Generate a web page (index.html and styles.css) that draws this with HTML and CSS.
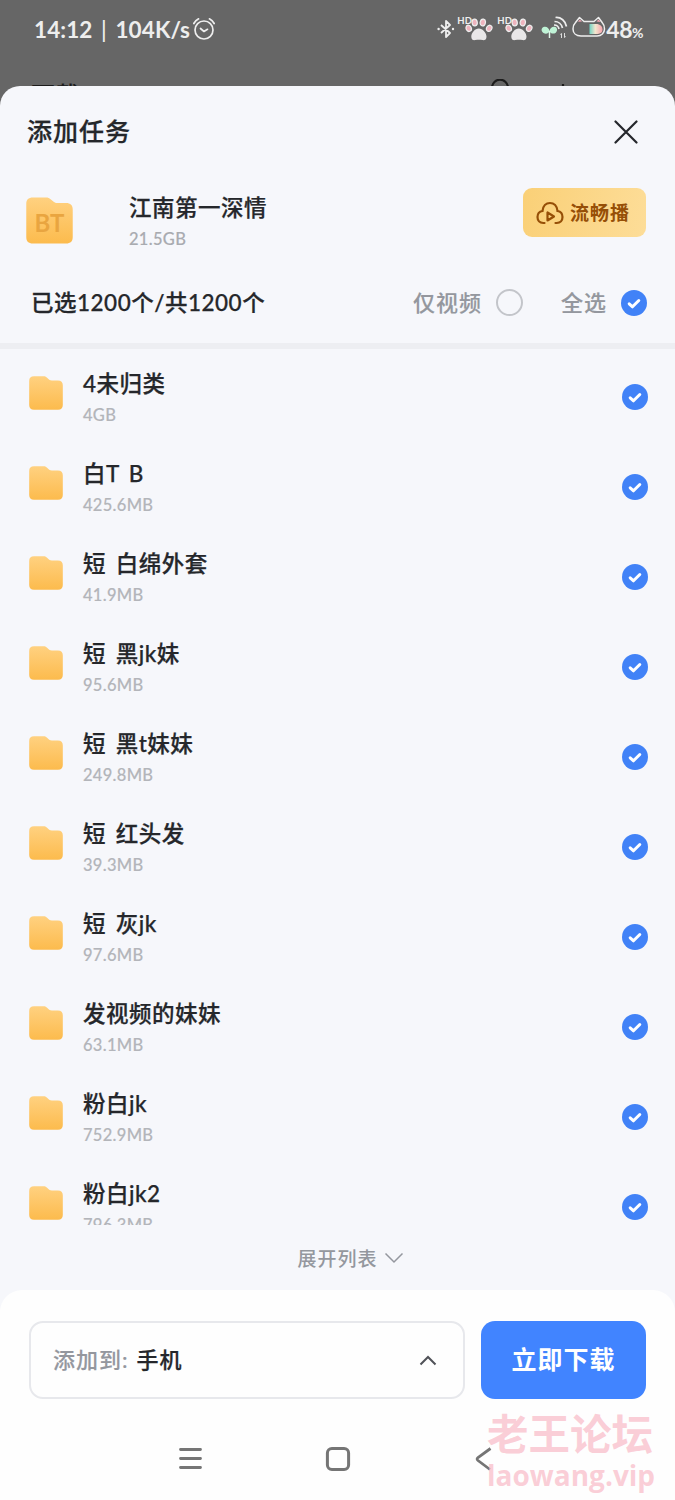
FILE: index.html
```html
<!DOCTYPE html>
<html lang="zh-CN">
<head>
  <meta charset="UTF-8" />
  <meta name="viewport" content="width=device-width, initial-scale=1.0"/>
  <title>添加任务</title>
  <link rel="stylesheet" href="styles.css">
</head>
<body>
  <!-- shared icons -->
  <svg class="defs">
    <defs>
      <linearGradient id="folderFill" x1="0" y1="0" x2="0" y2="1">
        <stop offset="0" stop-color="#ffd180"/>
        <stop offset="1" stop-color="#fcbb4d"/>
      </linearGradient>
    </defs>
    <symbol id="folder" viewBox="0 0 34 34">
      <path fill="url(#folderFill)" d="M5 .3h9.500c1.500 0 2.300.4 3.300 1.300l2.200 1.900c.8.700 1.600.9 2.700.9H29c3.200 0 4.800 1.600 4.800 4.800V29c0 3.200-1.600 4.700-4.800 4.700H5C1.800 33.700.2 32.200.2 29V5C.2 1.800 1.800.3 5 .3z"/>
    </symbol>
    <symbol id="check" viewBox="0 0 26 26">
      <circle cx="13" cy="13" r="13" fill="#4182f7"/>
      <path d="M8.200 13.800l3.300 3 6.300-6.300" fill="none" stroke="#fff" stroke-width="3" stroke-linecap="round" stroke-linejoin="round"/>
    </symbol>
    <symbol id="paw" viewBox="0 0 28 23">
      <g fill="#efb4be" stroke="#eee" stroke-width="1.200">
        <ellipse cx="3.700" cy="10.300" rx="2.600" ry="3.200" transform="rotate(-25 3.700 10.300)"/>
        <ellipse cx="9.700" cy="4.500" rx="2.600" ry="3.400" transform="rotate(-8 9.700 4.500)"/>
        <ellipse cx="17.800" cy="4.500" rx="2.600" ry="3.400" transform="rotate(12 17.800 4.500)"/>
        <ellipse cx="24.200" cy="10.300" rx="2.600" ry="3.200" transform="rotate(28 24.200 10.300)"/>
      </g>
      <path fill="#e9e7e8" d="M13.800 10.500c3.800 0 7.700 4.500 7.700 8.200 0 3-2 3.800-4 3.400-2.300-.5-4.900-.5-7.200 0-2 .4-4-.4-4-3.400 0-3.700 3.700-8.200 7.500-8.200z"/>
    </symbol>
  </svg>

  <header class="status">
    <span class="time">14:12 <i>|</i> 104K/s</span>
    <svg class="alarm" viewBox="0 0 24 24">
      <g fill="none" stroke="#eee" stroke-width="1.700" stroke-linecap="round" stroke-linejoin="round">
        <circle cx="12" cy="13" r="9"/>
        <path d="M8.500 11.500l3.500 3 3.500-2.200M1.800 6.500c1-2 2.500-3.500 4.800-4.700M22.200 6.500c-1-2-2.500-3.500-4.800-4.700"/>
      </g>
    </svg>
    <div class="status-right">
      <svg class="bluetooth" viewBox="0 0 18 18">
        <path d="M4 5l9 8-4 4V1l4 4-9 8" fill="none" stroke="#eee" stroke-width="1.800" stroke-linejoin="round"/>
        <circle cx="1.600" cy="9" r="1.200" fill="#eee"/>
        <circle cx="16" cy="9" r="1.200" fill="#eee"/>
      </svg>
      <div class="sim"><span>HD</span><svg><use href="#paw"/></svg></div>
      <div class="sim"><span>HD</span><svg><use href="#paw"/></svg></div>
      <svg class="sprout" viewBox="0 0 28 24">
        <path d="M8.500 15c-1 3-4 3.200-6 2C0 15.500 0 12 2.500 11c3-1 5.500 1 6 4zM8.500 15c.5-3 3-5 6-4 2.200 1 2 4.500 0 6-2 1-5 1-6-2z" fill="#bff3d6"/>
        <path d="M8.500 15v7" stroke="#dff5e8" stroke-width="1.500"/>
        <path d="M14.500 1.500c5.500-.5 10 3.500 11 9M13.500 5.500c4 0 7.200 2.800 8 6.500M13 9c2.500 0 4.500 1.500 5 4" fill="none" stroke="#eee" stroke-width="1.700"/>
        <path d="M20.500 22v-4.500l-1.200 1M23.500 17v4.500l1.200-1" fill="none" stroke="#ddd"/>
      </svg>
      <svg class="battery" viewBox="0 0 34 22">
        <defs>
          <linearGradient id="charge">
            <stop offset="0" stop-color="#71d3c3"/>
            <stop offset=".45" stop-color="#f4e7cf"/>
            <stop offset="1" stop-color="#f7a3ad"/>
          </linearGradient>
        </defs>
        <path d="M17.500 8H24c4.500 0 6.500 2.500 6.500 5.500s-2 4.500-6.500 4.500h-6.500z" fill="url(#charge)"/>
        <path d="M3.500 6.500L7.500 1.500l4.500 4h10l4.500-4 4 5.500c1.500 1.500 2 3.500 2 6 0 4-3 7-7.500 7H9c-5 0-8-3-8-7 0-2.500 1-5 2.500-6.500z" fill="none" stroke="#eee" stroke-width="1.500" stroke-linejoin="round"/>
        <path d="M6 5.800L7.800 3.500 10 5.500zM24.500 5.500l2-2 2 2.600z" fill="#f2a8b4"/>
      </svg>
      <span class="percent">48<small>%</small></span>
    </div>
  </header>

  <!-- page that is covered by the sheet -->
  <div class="behind">
    <span>下载</span>
    <svg viewBox="0 0 90 26">
      <path d="M3 14a8 8 0 1 1 12 0M72 5v12" fill="none" stroke="#1c1c1c" stroke-width="2.200"/>
    </svg>
  </div>

  <main class="sheet">
    <div class="sheet-head">
      <h1>添加任务</h1>
      <svg class="close" viewBox="0 0 24 24"><path d="M1.500 1.500l21 21M22.500 1.500l-21 21" stroke="#25272b" stroke-width="2.200" stroke-linecap="round"/></svg>
    </div>

    <section class="torrent">
      <div class="bt"><svg><use href="#folder"/></svg><b>BT</b></div>
      <div class="torrent-info">
        <div class="name">江南第一深情</div>
        <div class="size">21.5GB</div>
      </div>
      <button class="play">
        <svg viewBox="0 0 28 24">
          <path d="M8.500 22H7.300C3.600 22 1.500 19.300 1.500 16c0-3.500 2.300-5.500 5-6 .5-5 3.500-8 7.500-8s7 3 7.500 8c2.700.5 5 2.500 5 6 0 3.300-2.100 6-5.800 6h-1.200" fill="none" stroke="#964f07" stroke-width="2.200" stroke-linecap="round"/>
          <path d="M11.500 11.500v8l6.500-4z" fill="none" stroke="#964f07" stroke-width="2.200" stroke-linejoin="round"/>
        </svg>
        <span>流畅播</span>
      </button>
    </section>

    <section class="select-bar">
      <span class="count">已选1200个/共1200个</span>
      <span class="option">仅视频</span>
      <i class="radio"></i>
      <span class="option all">全选</span>
      <svg class="check"><use href="#check"/></svg>
    </section>

    <ul class="files">
      <li>
        <svg class="folder"><use href="#folder"/></svg>
        <div class="file"><div class="name">4未归类</div><div class="size">4GB</div></div>
        <svg class="check"><use href="#check"/></svg>
      </li>
      <li>
        <svg class="folder"><use href="#folder"/></svg>
        <div class="file"><div class="name">白T B</div><div class="size">425.6MB</div></div>
        <svg class="check"><use href="#check"/></svg>
      </li>
      <li>
        <svg class="folder"><use href="#folder"/></svg>
        <div class="file"><div class="name">短 白绵外套</div><div class="size">41.9MB</div></div>
        <svg class="check"><use href="#check"/></svg>
      </li>
      <li>
        <svg class="folder"><use href="#folder"/></svg>
        <div class="file"><div class="name">短 黑jk妹</div><div class="size">95.6MB</div></div>
        <svg class="check"><use href="#check"/></svg>
      </li>
      <li>
        <svg class="folder"><use href="#folder"/></svg>
        <div class="file"><div class="name">短 黑t妹妹</div><div class="size">249.8MB</div></div>
        <svg class="check"><use href="#check"/></svg>
      </li>
      <li>
        <svg class="folder"><use href="#folder"/></svg>
        <div class="file"><div class="name">短 红头发</div><div class="size">39.3MB</div></div>
        <svg class="check"><use href="#check"/></svg>
      </li>
      <li>
        <svg class="folder"><use href="#folder"/></svg>
        <div class="file"><div class="name">短 灰jk</div><div class="size">97.6MB</div></div>
        <svg class="check"><use href="#check"/></svg>
      </li>
      <li>
        <svg class="folder"><use href="#folder"/></svg>
        <div class="file"><div class="name">发视频的妹妹</div><div class="size">63.1MB</div></div>
        <svg class="check"><use href="#check"/></svg>
      </li>
      <li>
        <svg class="folder"><use href="#folder"/></svg>
        <div class="file"><div class="name">粉白jk</div><div class="size">752.9MB</div></div>
        <svg class="check"><use href="#check"/></svg>
      </li>
      <li>
        <svg class="folder"><use href="#folder"/></svg>
        <div class="file"><div class="name">粉白jk2</div><div class="size">796.3MB</div></div>
        <svg class="check"><use href="#check"/></svg>
      </li>
    </ul>

    <div class="expand">
      <span>展开列表</span>
      <svg viewBox="0 0 20 12"><path d="M1.500 1.500l8.500 8.500 8.500-8.500" fill="none" stroke="#94979e" stroke-width="1.500"/></svg>
    </div>

    <footer class="bottom">
      <div class="actions">
        <div class="target">
          <span class="label">添加到:</span>
          <span class="device">手机</span>
          <svg viewBox="0 0 18 11"><path d="M1.500 9.500L9 2l7.500 7.500" fill="none" stroke="#505258" stroke-width="2"/></svg>
        </div>
        <button class="download">立即下载</button>
      </div>
      <nav class="nav">
        <svg viewBox="0 0 26 26"><path d="M2.500 3.500h20M2.500 12.500h20M2.500 21.500h20" stroke="#757575" stroke-width="2.800" stroke-linecap="round"/></svg>
        <svg viewBox="0 0 26 26"><rect x="2.400" y="2.400" width="21.200" height="21.200" rx="4.500" fill="none" stroke="#757575" stroke-width="3"/></svg>
        <svg viewBox="0 0 26 26"><path d="M18.500 2.500L6 11.500q-1.800 1.500 0 3L18 23.500" fill="none" stroke="#757575" stroke-width="2.800"/></svg>
      </nav>
    </footer>
  </main>

  <div class="watermark">
    <div class="forum">老王论坛</div>
    <div class="site">laowang.vip</div>
  </div>
</body>
</html>
```
FILE: styles.css
```css
* { box-sizing: border-box; }

body {
  margin: 0;
  width: 675px;
  height: 1500px;
  overflow: hidden;
  position: relative;
  display: flex;
  flex-direction: column;
  background: #666;
  color: #25272b;
  font-family: Lato, "Noto Sans CJK SC", sans-serif;
  font-weight: 500;
}

h1, ul { margin: 0; padding: 0; }
svg { display: block; flex: none; }
button { border: none; padding: 0; font-family: inherit; }
.defs { position: absolute; width: 0; height: 0; }

/* status bar */
.status {
  height: 60px;
  padding: 0 32px 2px 34px;
  display: flex;
  align-items: center;
  color: #eee;
}

.time {
  font-size: 22.500px;
  font-weight: bold;
  letter-spacing: 0.1px;
  white-space: nowrap;
}

.time i { font-style: normal; font-weight: 500; margin: 0 3px; }
.alarm { width: 24px; height: 24px; margin-left: 2px; margin-top: -1px; }

.status-right {
  margin-left: auto;
  display: flex;
  align-items: center;
}

.bluetooth { width: 18px; height: 18px; }
.sim { display: flex; margin-left: 2px; height: 28px; }
.sim span { font-size: 9.500px; font-weight: bold; line-height: 12px; width: 9px; }
.sim svg { width: 28px; height: 23px; margin-top: 3px; margin-left: -1px; }
.sim + .sim { margin-left: 4px; }
.sprout { width: 28px; height: 24px; margin: -2px 0 0 8px; }
.battery { width: 34px; height: 22px; margin: -4px 0 0 3px; }
.percent { font-size: 23px; font-weight: bold; letter-spacing: -0.5px; }
.percent small { font-size: 14px; }

.behind {
  height: 26px;
  padding-left: 31px;
  display: flex;
  justify-content: space-between;
  overflow: hidden;
  font-size: 24px;
  line-height: 52px;
  color: #1c1c1c;
}

.behind span { padding-top: 9px; }
.behind svg { width: 90px; height: 26px; margin-right: 94px; margin-top: 19px; }

/* sheet */
.sheet {
  flex: 1;
  display: flex;
  flex-direction: column;
  background: #f6f7fb;
  border-radius: 20px 20px 0 0;
}

.sheet-head {
  height: 92px;
  padding: 0 37px 0 27px;
  display: flex;
  align-items: center;
  justify-content: space-between;
}

.sheet-head h1 {
  margin-top: -4px;
  font-size: 25px;
  font-weight: 500;
  letter-spacing: 1px;
}

/* thickens the medium weight a little */
.sheet-head h1, .name, .count, .device {
  -webkit-text-stroke: 0.25px currentColor;
}

.option, .label {
  -webkit-text-stroke: 0.15px currentColor;
}

.close { width: 24px; height: 24px; }

.torrent {
  height: 84px;
  padding: 10px 29px 0 26px;
  display: flex;
  align-items: flex-start;
}

.bt { position: relative; margin-top: 9px; width: 47px; height: 47px; }
.bt svg { width: 47px; height: 47px; }
.bt b {
  position: absolute;
  inset: 3px 0 0 0;
  text-align: center;
  font-size: 24px;
  line-height: 45px;
  color: #e9a540;
}

.name {
  font-size: 22.500px;
  line-height: 34px;
  letter-spacing: 0.5px;
  word-spacing: 3.500px;
  white-space: pre;
}

.size {
  font-size: 16.500px;
  line-height: 24px;
  color: #b3b5ba;
  letter-spacing: 0.3px;
  -webkit-text-stroke: 0.15px currentColor;
}

.torrent-info { margin-left: 56px; margin-top: 3px; }

.torrent-info .size { margin-top: 2px; color: #a9abb0; }

.play {
  margin-left: auto;
  width: 123px;
  height: 49px;
  padding-left: 13px;
  display: flex;
  align-items: center;
  gap: 6px;
  border-radius: 9px;
  background: linear-gradient(100deg, #fad077, #fddd98);
  color: #964f07;
  font-size: 19px;
  font-weight: bold;
  letter-spacing: 1px;
}

.play svg { width: 28px; height: 24px; }
.play span { margin-top: -2px; }

.select-bar {
  height: 87px;
  padding: 0 28px 0 31px;
  display: flex;
  align-items: center;
  border-bottom: 6px solid #edeef2;
}

.select-bar span { margin-top: -4px; }
.count { font-size: 22.500px; letter-spacing: 0.5px; margin-right: auto; }
.option { font-size: 22px; letter-spacing: 1px; color: #94979e; }
.radio { width: 27px; height: 27px; margin-left: 14px; border: 2px solid #c3c5ca; border-radius: 50%; }
.all { margin-left: 38px; margin-right: 14px; }
.check { width: 26px; height: 26px; }

/* file list, the last row is cut off */
.files { height: 876px; overflow: hidden; list-style: none; }

.files li {
  height: 90px;
  padding: 18px 27px 0 29px;
  display: flex;
  align-items: flex-start;
}

.folder { width: 34px; height: 34px; margin-top: 9px; }
.file { margin-left: 20px; flex: 1; }
.file .size { margin-top: 2px; }
.files .check { margin-top: 17px; }

.expand {
  flex: 1;
  display: flex;
  justify-content: center;
  align-items: center;
  gap: 6px;
  padding-left: 26px;
  font-size: 19px;
  letter-spacing: 1px;
  color: #94979e;
}

.expand svg { width: 20px; height: 12px; }

.bottom {
  height: 210px;
  padding-top: 31px;
  background: #fefefe;
  border-radius: 22px 22px 0 0;
}

.actions { display: flex; gap: 16px; padding: 0 29px; }

.target {
  width: 436px;
  height: 78px;
  padding: 0 26px 0 22px;
  display: flex;
  align-items: center;
  border: 2px solid #e7e8ec;
  border-radius: 14px;
  font-size: 22px;
  letter-spacing: 1px;
}

.target span { margin-top: -4px; }
.label { color: #94979e; margin-right: 8px; }
.target svg { width: 18px; height: 11px; margin-left: auto; }

.download {
  flex: 1;
  height: 78px;
  padding-bottom: 4px;
  border-radius: 14px;
  background: #4184ff;
  color: #fff;
  font-size: 25px;
  font-weight: bold;
  letter-spacing: 1px;
}

.nav { display: flex; justify-content: center; gap: 121px; padding-top: 47px; }
.nav svg { width: 26px; height: 26px; }

.watermark {
  position: absolute;
  left: 487px;
  top: 1408px;
  color: rgba(249, 190, 202, 0.75);
  font-weight: bold;
}

.forum { font-size: 41.500px; line-height: 52px; }
.site { font-family: "Open Sans", sans-serif; font-size: 28px; line-height: 30px; }
```
